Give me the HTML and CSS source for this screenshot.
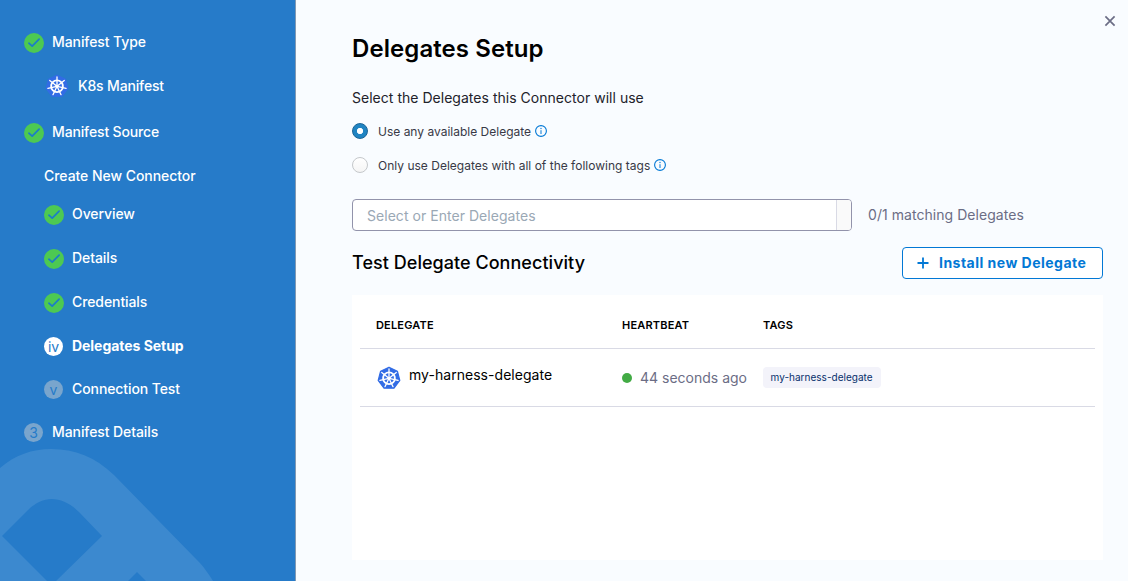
FILE: index.html
```html
<!DOCTYPE html>
<html lang="en">
<head>
<meta charset="utf-8">
<title>Delegates Setup</title>
<link rel="stylesheet" href="styles.css">
</head>
<body>
<svg class="defs" width="0" height="0" aria-hidden="true">
  <symbol id="check" viewBox="0 0 20 20">
    <circle cx="10" cy="10" r="10" fill="#4dc952"/>
    <path d="M4.9 10.2 8.2 13.1 15.1 6.1" fill="none" stroke="#1b7cc9" stroke-width="1.7" stroke-linecap="round" stroke-linejoin="round"/>
  </symbol>
  <symbol id="k8s" viewBox="0 0 24 24">
    <path d="M12 1.2 20.4 5.2 22.8 14.3 17 22.2H7L1.2 14.3 3.6 5.2Z" fill="#326ce5" stroke="#326ce5" stroke-width="1.2" stroke-linejoin="round"/>
    <g fill="none" stroke="#fff" stroke-width="1.3" stroke-linecap="round">
      <circle cx="12" cy="12.3" r="5.9" stroke-width="1.8"/>
      <path d="M12 11V3"/>
      <path d="M12 11V3" transform="rotate(51.43 12 12.3)"/>
      <path d="M12 11V3" transform="rotate(102.86 12 12.3)"/>
      <path d="M12 11V3" transform="rotate(154.29 12 12.3)"/>
      <path d="M12 11V3" transform="rotate(205.71 12 12.3)"/>
      <path d="M12 11V3" transform="rotate(257.14 12 12.3)"/>
      <path d="M12 11V3" transform="rotate(308.57 12 12.3)"/>
    </g>
    <circle cx="12" cy="12.3" r="1.6" fill="#fff"/>
  </symbol>
  <symbol id="info" viewBox="0 0 12 12">
    <circle cx="6" cy="6" r="5.4" fill="none" stroke="#0278d5" stroke-width="1.1"/>
    <path d="M6 5.2V9" stroke="#0278d5" stroke-width="1"/>
    <circle cx="6" cy="3.5" r=".65" fill="#0278d5"/>
  </symbol>
</svg>
<div class="wizard">
  <aside class="sidebar">
    <svg class="watermark" width="230" height="140" viewBox="0 441 230 140">
      <path fill="#3c89cf" fill-rule="evenodd" d="M0 468C15 455 32 449 51 449C75 449 95 457 114 475L197 560C204 567 208 573 213 581H146L137 572 128 581H56L102 536 79 512C61 495 43 495 27 511L2 536 47 581H0Z"/>
    </svg>
    <ul class="steps">
      <li class="step"><svg class="mark"><use href="#check"/></svg><span>Manifest Type</span></li>
      <li class="step manifest"><svg class="logo"><use href="#k8s"/></svg><span>K8s Manifest</span></li>
      <li class="step source"><svg class="mark"><use href="#check"/></svg><span>Manifest Source</span></li>
      <li class="step heading"><span>Create New Connector</span></li>
      <li class="step sub first"><svg class="mark"><use href="#check"/></svg><span>Overview</span></li>
      <li class="step sub"><svg class="mark"><use href="#check"/></svg><span>Details</span></li>
      <li class="step sub"><svg class="mark"><use href="#check"/></svg><span>Credentials</span></li>
      <li class="step sub current"><i class="num">iv</i><span>Delegates Setup</span></li>
      <li class="step sub pending"><i class="num">v</i><span>Connection Test</span></li>
      <li class="step pending"><i class="num">3</i><span>Manifest Details</span></li>
    </ul>
  </aside>
  <main class="content">
    <button class="close" aria-label="Close"><svg width="12" height="12" viewBox="0 0 12 12"><path d="M1.4 1.4 10.6 10.6M10.6 1.4 1.4 10.6" stroke="#6b6d85" stroke-width="1.7"/></svg></button>
    <h1 class="title">Delegates Setup</h1>
    <p class="lead">Select the Delegates this Connector will use</p>
    <label class="option"><i class="radio checked"></i><span>Use any available Delegate</span><svg class="info"><use href="#info"/></svg></label>
    <label class="option second"><i class="radio"></i><span>Only use Delegates with all of the following tags</span><svg class="info"><use href="#info"/></svg></label>
    <div class="picker">
      <div class="select"><span class="placeholder">Select or Enter Delegates</span><i class="handle"></i></div>
      <span class="matching">0/1 matching Delegates</span>
    </div>
    <div class="bar">
      <h2 class="subtitle">Test Delegate Connectivity</h2>
      <button class="install"><svg width="12" height="12" viewBox="0 0 12 12"><path d="M6 .5V11.5M.5 6H11.5" stroke="#0278d5" stroke-width="1.8"/></svg><span>Install new Delegate</span></button>
    </div>
    <section class="table">
      <div class="row head"><span>DELEGATE</span><span>HEARTBEAT</span><span>TAGS</span></div>
      <div class="row body">
        <div class="name"><svg class="k8s"><use href="#k8s"/></svg><span>my-harness-delegate</span></div>
        <div class="beat"><i class="dot"></i><span>44 seconds ago</span></div>
        <div class="tags"><span class="tag">my-harness-delegate</span></div>
      </div>
    </section>
  </main>
</div>
</body>
</html>
```
FILE: styles.css
```css
* { box-sizing: border-box; }
body { margin: 0; font-family: Inter, "Liberation Sans", sans-serif; font-size: 14px; color: #22222a; }
h1, h2, p, ul { margin: 0; padding: 0; }
i { font-style: normal; }
button { font-family: inherit; padding: 0; }
svg { flex: none; display: block; }
.defs { position: absolute; }
.wizard { display: flex; width: 1128px; height: 581px; overflow: hidden; }

.sidebar { position: relative; width: 296px; background: #267bc9; border-right: 1px solid #8199b3; flex: none; }
.watermark { position: absolute; left: 0; bottom: 0; }
.steps { position: relative; list-style: none; padding: 32px 0 0 24px; color: #fff; }
.step { display: flex; align-items: center; height: 20px; gap: 8px; margin-bottom: 24px; white-space: nowrap; font-weight: 500; letter-spacing: -.09px; }
.step span { padding-bottom: 2px; }
.mark { width: 20px; height: 20px; position: relative; top: 1px; }
.manifest { padding-left: 21px; gap: 9px; margin-bottom: 26px; letter-spacing: -.16px; }
.logo { width: 24px; height: 24px; }
.source { letter-spacing: -.14px; }
.heading { padding-left: 20px; margin-bottom: 18px; letter-spacing: -.05px; }
.sub { padding-left: 20px; }
.current { font-weight: 700; margin-bottom: 23px; letter-spacing: -.04px; }
.pending { margin-bottom: 23px; }
.num { width: 19px; height: 19px; margin-right: 1px; border-radius: 50%; background: #fff; color: #267bc9; font-size: 14px; font-weight: 400; line-height: 20px; text-align: center; }
.pending .num { background: #79a5cd; }

.content { position: relative; flex: 1; background: #f9fcff; padding: 33px 25px 21px 56px; display: flex; flex-direction: column; }
.close { position: absolute; right: 12px; top: 15px; width: 12px; height: 12px; border: 0; background: none; }
.title { font-size: 24px; line-height: 32px; font-weight: 600; letter-spacing: .08px; color: #000; }
.lead { margin-top: 23px; line-height: 20px; letter-spacing: .025px; }
.option { display: flex; align-items: center; height: 16px; margin-top: 15px; font-size: 12px; color: #383946; }
.second { margin-top: 18px; letter-spacing: .01px; }
.radio { width: 16px; height: 16px; margin-right: 10px; border-radius: 50%; border: 1px solid #c5c8cb; background: linear-gradient(#fff, #f5f5f5); }
.radio.checked { border-color: #1a6496; background: radial-gradient(circle, #fff 0 2.8px, #2084c2 3.4px); }
.info { width: 12px; height: 12px; margin-left: 4px; }
.picker { display: flex; align-items: center; margin-top: 26px; gap: 16px; }
.select { display: flex; align-items: center; justify-content: space-between; width: 500px; height: 32px; border: 1px solid #9293ab; border-radius: 4px; background: #fff; overflow: hidden; }
.placeholder { padding: 0 0 0 14px; color: #9aa8b5; letter-spacing: .04px; }
.handle { width: 15px; height: 30px; border-left: 1px solid #d9dae5; background: #fafafa; }
.matching { padding-bottom: 2px; color: #6b6d85; letter-spacing: .05px; }
.bar { display: flex; justify-content: space-between; align-items: center; margin-top: 16px; height: 32px; }
.subtitle { font-size: 18px; line-height: 24px; font-weight: 500; letter-spacing: .04px; color: #000; }
.install { display: flex; align-items: center; justify-content: flex-start; gap: 10px; width: 201px; height: 32px; padding-left: 14px; border: 1px solid #0278d5; border-radius: 4px; background: #fff; color: #0278d5; font-size: 14px; font-weight: 700; letter-spacing: .48px; white-space: nowrap; }
.install span { padding-bottom: 2px; }
.table { flex: 1; margin-top: 16px; padding: 0 8px; background: #fff; }
.row { display: grid; grid-template-columns: 246px 141px 1fr; padding-left: 16px; border-bottom: 1px solid #d9dae5; align-items: center; white-space: nowrap; }
.head { height: 54px; padding-top: 7px; font-size: 11px; font-weight: 600; letter-spacing: .18px; color: #000; }
.body { height: 58px; }
.name { display: flex; align-items: center; gap: 8px; padding-left: 1px; color: #000; letter-spacing: .04px; }
.name span { margin-bottom: 6px; }
.k8s { width: 24px; height: 24px; position: relative; top: .5px; }
.beat { display: flex; align-items: center; gap: 8px; color: #6b6d85; }
.dot { width: 10px; height: 10px; border-radius: 50%; background: #42ab45; }
.tags { display: flex; }
.tag { padding: 0 8px 0 7.5px; height: 21px; line-height: 21px; border-radius: 4px; background: #f3f3fa; color: #07306c; font-size: 10px; letter-spacing: .02px; }
```
